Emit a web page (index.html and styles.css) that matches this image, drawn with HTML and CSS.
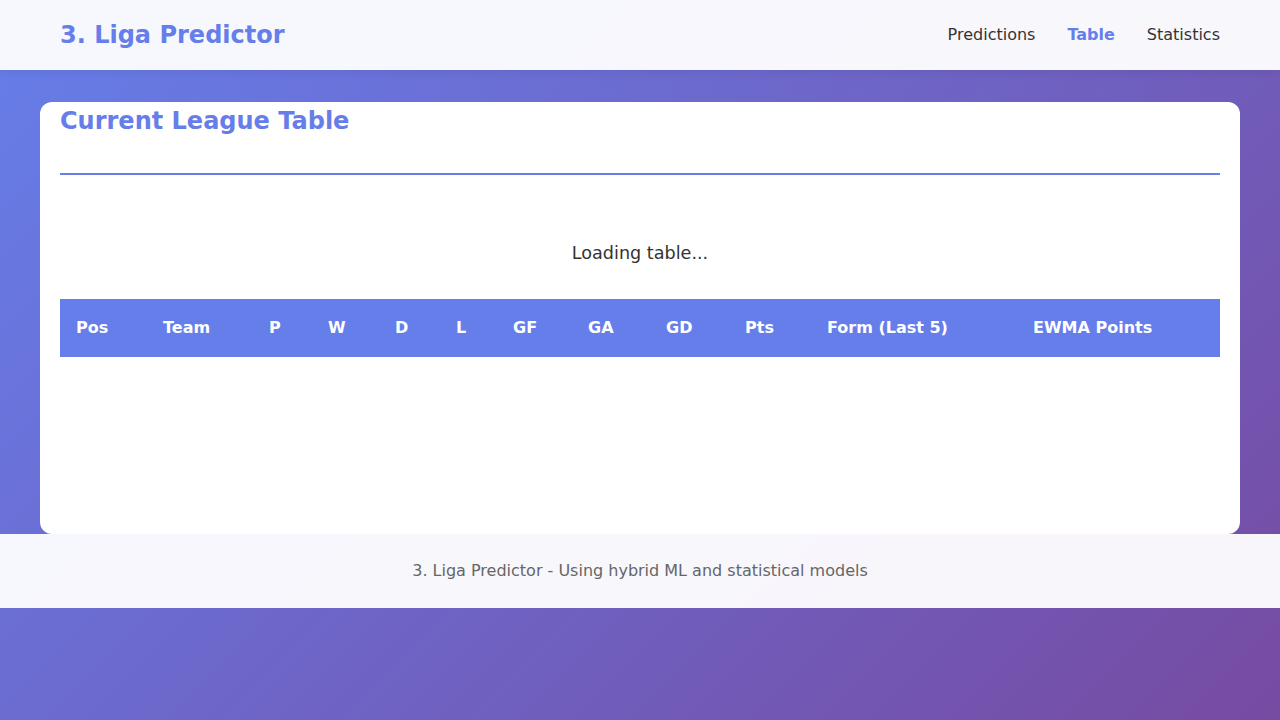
FILE: index.html
```html
<!DOCTYPE html>
<html lang="en">
<head>
<meta charset="utf-8">
<title>3. Liga Predictor - Table</title>
<link rel="stylesheet" href="styles.css">
</head>
<body>
<header class="site-header">
  <div class="header-inner">
    <div class="logo">3. Liga Predictor</div>
    <nav class="nav">
      <a class="nav-link" href="#">Predictions</a>
      <a class="nav-link active" href="#">Table</a>
      <a class="nav-link" href="#">Statistics</a>
    </nav>
  </div>
</header>
<main class="main">
  <section class="card">
    <h2 class="card-title">Current League Table</h2>
    <div class="loading">Loading table...</div>
    <table class="league-table">
      <thead>
        <tr>
          <th class="c-pos">Pos</th>
          <th class="c-team">Team</th>
          <th class="c-p">P</th>
          <th class="c-w">W</th>
          <th class="c-d">D</th>
          <th class="c-l">L</th>
          <th class="c-gf">GF</th>
          <th class="c-ga">GA</th>
          <th class="c-gd">GD</th>
          <th class="c-pts">Pts</th>
          <th class="c-form">Form (Last 5)</th>
          <th class="c-ewma">EWMA Points</th>
        </tr>
      </thead>
      <tbody></tbody>
    </table>
  </section>
</main>
<footer class="site-footer">
  <p class="footer-text">3. Liga Predictor - Using hybrid ML and statistical models</p>
</footer>
</body>
</html>
```

FILE: styles.css
```css
* {
  box-sizing: border-box;
}

html, body {
  margin: 0;
  padding: 0;
}

body {
  font-family: "DejaVu Sans", Verdana, sans-serif;
  color: #333;
  min-height: 100vh;
  background: linear-gradient(135deg, #667eea 0%, #764ba2 100%);
}

.site-header {
  background: rgba(255, 255, 255, 0.95);
  box-shadow: 0 2px 10px rgba(0, 0, 0, 0.08);
}

.header-inner {
  max-width: 1200px;
  margin: 0 auto;
  padding: 0 20px;
  height: 70px;
  display: flex;
  align-items: center;
  justify-content: space-between;
}

.logo {
  font-size: 24px;
  font-weight: bold;
  color: #667eea;
  line-height: 28px;
}

.nav {
  display: flex;
  gap: 32px;
  margin-top: -2px;
}

.nav-link {
  font-size: 16px;
  color: #333;
  text-decoration: none;
}

.nav-link.active {
  color: #667eea;
  font-weight: bold;
}

.main {
  max-width: 1200px;
  margin: 32px auto 0;
}

.card {
  background: #fff;
  border-radius: 12px;
  padding: 5px 20px 177px;
}

.card-title {
  margin: 0;
  font-size: 24px;
  line-height: 28px;
  color: #667eea;
  padding-bottom: 38px;
  border-bottom: 2px solid #667eea;
}

.loading {
  text-align: center;
  font-size: 17.6px;
  line-height: 20px;
  margin: 68px 0 36px;
  color: #333;
}

.league-table {
  width: 100%;
  border-collapse: collapse;
}

.league-table th {
  background: #667eea;
  color: #fff;
  font-size: 16px;
  font-weight: bold;
  text-align: left;
  padding: 20px 16px;
  line-height: 18px;
  white-space: nowrap;
}

.c-pos { width: 87px; }
.c-team { width: 106px; }
.c-p { width: 59px; }
.c-w { width: 67px; }
.c-d { width: 61px; }
.c-l { width: 57px; }
.c-gf { width: 75px; }
.c-ga { width: 78px; }
.c-gd { width: 79px; }
.c-pts { width: 82px; }
.c-form { width: 206px; }
.c-ewma { width: 203px; }

.site-footer {
  background: rgba(255, 255, 255, 0.95);
  padding: 27px 0;
  text-align: center;
}

.footer-text {
  margin: 0;
  font-size: 16px;
  line-height: 20px;
  color: #666;
}
```
